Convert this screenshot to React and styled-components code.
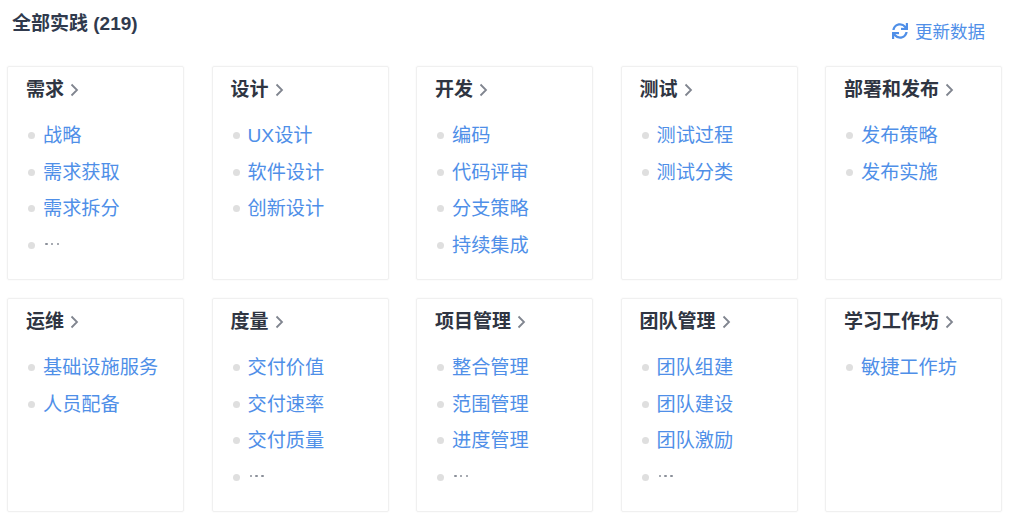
import React from 'react';
import styled, { createGlobalStyle } from 'styled-components';
import { FaSync } from 'react-icons/fa';

const GlobalStyle = createGlobalStyle`
  html, body {
    margin: 0;
    padding: 0;
    background: #fff;
    font-family: "Liberation Sans", "Noto Sans CJK SC", sans-serif;
  }
`;

const Page = styled.div`
  width: 1011px;
  height: 519px;
  overflow: hidden;
  padding: 0 8px 0 7px;
  box-sizing: border-box;
`;

const Header = styled.div`
  display: flex;
  justify-content: space-between;
  height: 66px;
  padding: 12px 18px 0 5px;
  box-sizing: border-box;
`;

const Title = styled.h2`
  margin: 0;
  font-size: 19px;
  line-height: 23px;
  font-weight: 700;
  color: #303a4d;
`;

const Refresh = styled.a`
  display: flex;
  align-items: center;
  gap: 7px;
  height: 20px;
  margin-top: 8px;
  font-size: 17.5px;
  color: #4f8fe8;
`;

const RefreshIcon = styled(FaSync)`
  width: 16px;
  height: 16px;
  margin-top: 1px;
`;

const Grid = styled.div`
  display: grid;
  grid-template-columns: repeat(5, 177px);
  grid-auto-rows: 214px;
  column-gap: 27.5px;
  row-gap: 18px;
`;

const Card = styled.section`
  box-sizing: border-box;
  border: 1px solid #f0f0f0;
  border-radius: 2px;
  box-shadow: 0 0 2px rgba(0, 0, 0, 0.06);
  padding: 10px 0 0 18px;
`;

const CardTitle = styled.h3`
  display: flex;
  align-items: center;
  gap: 6px;
  margin: 0 0 19px;
  font-size: 19px;
  line-height: 25px;
  font-weight: 700;
  color: #2f3542;
`;

const List = styled.ul`
  display: flex;
  flex-direction: column;
  gap: 10.7px;
  margin: 0;
  padding: 0;
  list-style: none;
`;

const Item = styled.li`
  display: flex;
  align-items: center;
  gap: 8px;
  height: 26px;
  padding-left: 2px;
  font-size: 19.2px;
  color: #4f8fe8;
  &::before {
    content: '';
    width: 7px;
    height: 7px;
    margin-top: 3px;
    border-radius: 50%;
    background: #dfdfdf;
    flex: none;
  }
`;

const Dots = styled.span`
  display: flex;
  gap: 3.400px;
  margin-left: 2px;
`;

const Dot = styled.i`
  width: 2.500px;
  height: 2.500px;
  border-radius: 50%;
  background: #8a8f99;
`;

const Chevron = () => (
  <svg width="9" height="14" viewBox="0 0 9 14" fill="none">
    <path d="M1.500 1.500 7 7l-5.500 5.500" stroke="#80858f" strokeWidth="1.800" />
  </svg>
);

const categories = [
  { name: '需求', items: ['战略', '需求获取', '需求拆分'], more: true },
  { name: '设计', items: ['UX设计', '软件设计', '创新设计'] },
  { name: '开发', items: ['编码', '代码评审', '分支策略', '持续集成'] },
  { name: '测试', items: ['测试过程', '测试分类'] },
  { name: '部署和发布', items: ['发布策略', '发布实施'] },
  { name: '运维', items: ['基础设施服务', '人员配备'] },
  { name: '度量', items: ['交付价值', '交付速率', '交付质量'], more: true },
  { name: '项目管理', items: ['整合管理', '范围管理', '进度管理'], more: true },
  { name: '团队管理', items: ['团队组建', '团队建设', '团队激励'], more: true },
  { name: '学习工作坊', items: ['敏捷工作坊'] },
];

const App = () => (
  <Page>
    <GlobalStyle />
    <Header>
      <Title>全部实践 (219)</Title>
      <Refresh>
        <RefreshIcon />
        更新数据
      </Refresh>
    </Header>
    <Grid>
      {categories.map((cat) => (
        <Card key={cat.name}>
          <CardTitle>
            {cat.name}
            <Chevron />
          </CardTitle>
          <List>
            {cat.items.map((item) => <Item key={item}>{item}</Item>)}
            {cat.more && (
              <Item>
                <Dots><Dot /><Dot /><Dot /></Dots>
              </Item>
            )}
          </List>
        </Card>
      ))}
    </Grid>
  </Page>
);

export default App;
